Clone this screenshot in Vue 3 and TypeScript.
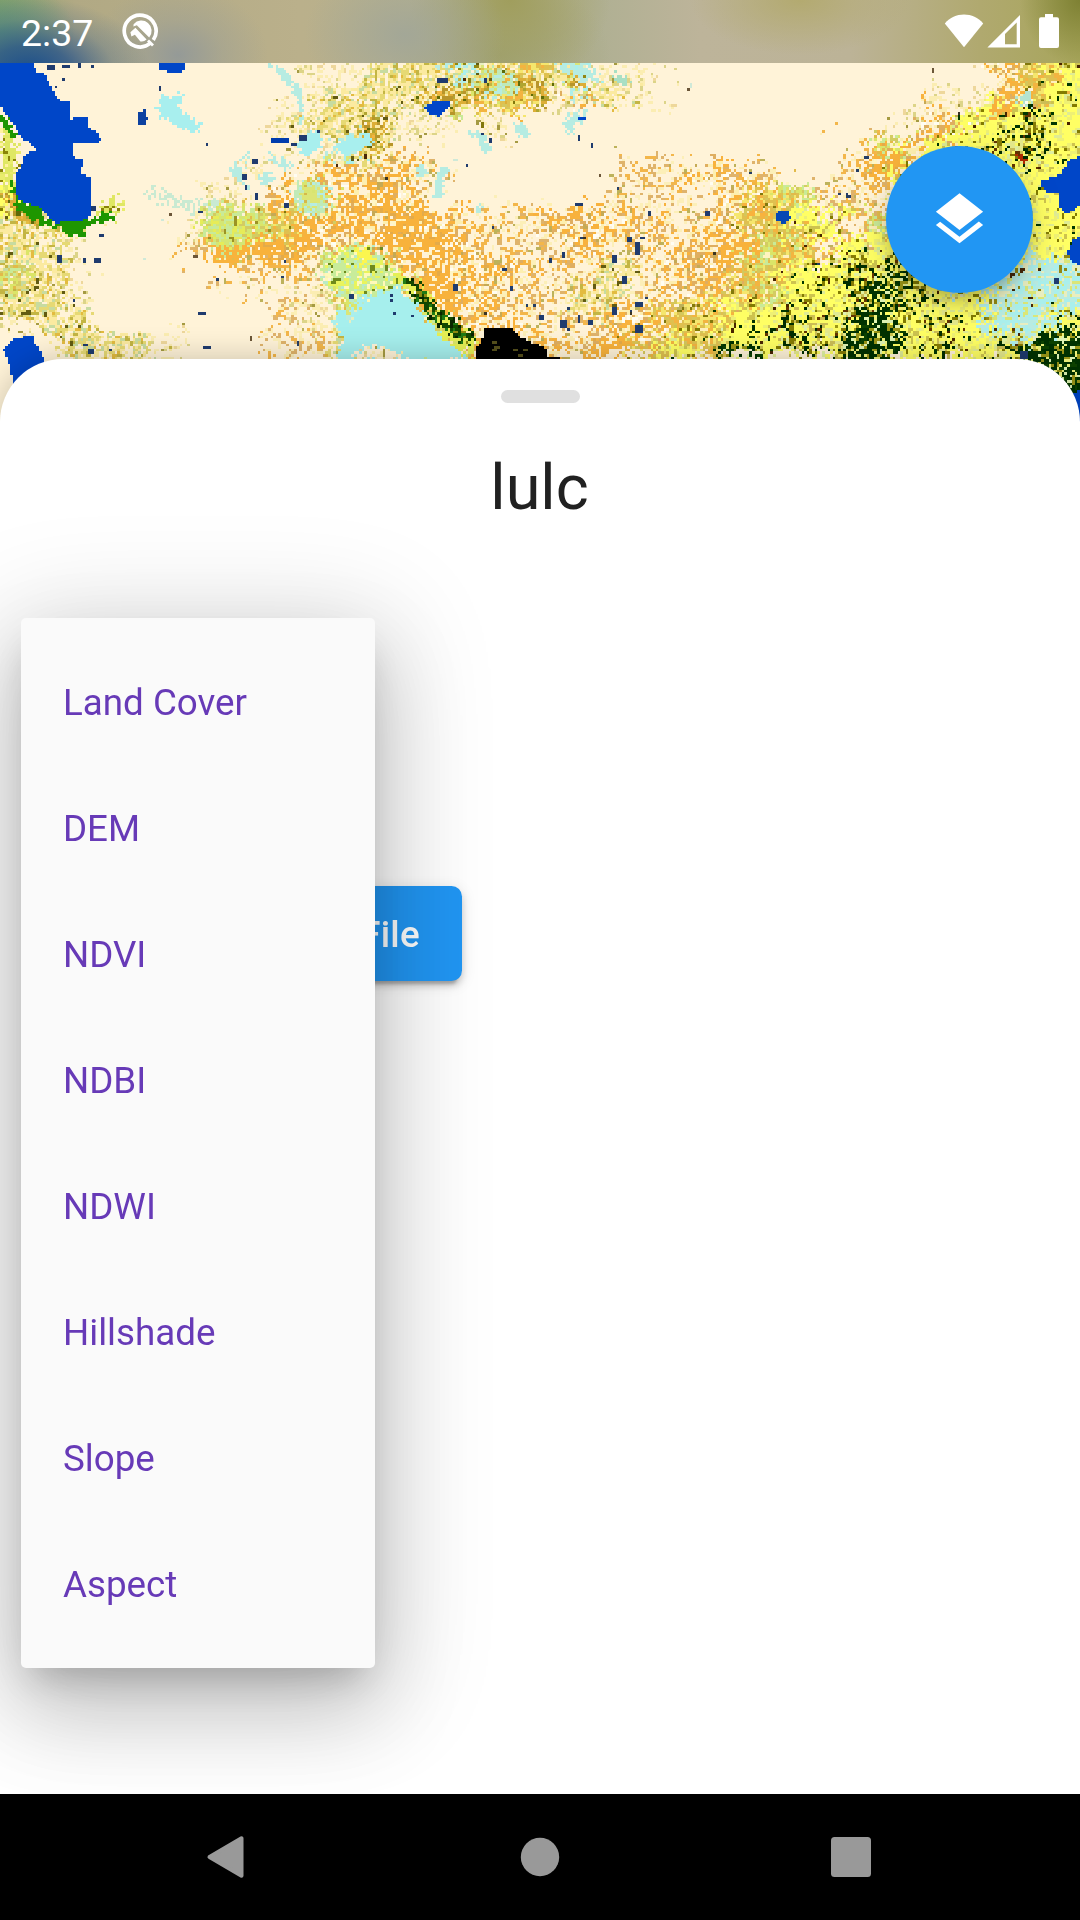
<script setup lang="ts">
import { onMounted, ref } from 'vue'

type Point = [number, number]
type Mix = [string, number][]

const layers: string[] = ['Land Cover', 'DEM', 'NDVI', 'NDBI', 'NDWI', 'Hillshade', 'Slope', 'Aspect']

const mapCanvas = ref<HTMLCanvasElement | null>(null)

const COLS = 415
const ROWS = 166
const CELL = 1080 / COLS

// Coarse land cover zones: one letter covers 30 x 25 px, starting at y = 60.
const zones: string[] = [
  '..........ssyyycymycss...........omY',
  '..........syyyygmmsoys.........ssomY',
  '.........syyyss.s.............soYYDY',
  '.........sscy...............rgoYYDDY',
  '........s.rooor......rrorr..rOYYYYYY',
  'Y......s.ogoOo......rrr.omgrrrYYYYYY',
  'ysy...sggmoOoOoorroooorromYYrgYYYYYY',
  'yys...rgOOoooOOorrrorrooOgmrYYYYYYYY',
  'gys....rrrrggoOoOorryrooomYYDDBDcccc',
  'yys......rsgCgOoorryyrromgYYDBDYYccc',
  'syy......rscCCgoorrroommYYDDBBYDYccD',
  '..yyys...rryCCgoroorOmYmBYDDBBYDYDBB',
  '.................................DBB',
  '.................................DBB',
  '.................................BBB',
]

const SAND = '#fff3d8'
const mixes: Record<string, Mix> = {
  '.': [[SAND, 0.9992], ['#cfe9d8', 0.9997], ['#6b5638', 1]],
  s: [[SAND, 0.66], ['#fbedb2', 0.86], ['#dcd488', 0.94], ['#eed79b', 0.985], ['#a59a42', 1]],
  y: [[SAND, 0.2], ['#fbeaa0', 0.52], ['#e6d974', 0.74], ['#c7dba0', 0.84], ['#c3b544', 0.92], ['#e3bb40', 0.985], ['#625b12', 1]],
  r: [[SAND, 0.56], ['#fcefb8', 0.72], ['#f3b64a', 0.85], ['#dfb36b', 0.96], ['#bdb25a', 0.993], ['#243d66', 1]],
  o: [[SAND, 0.28], ['#fdefb0', 0.46], ['#f8b23d', 0.77], ['#dfae60', 0.91], ['#fffdf2', 0.96], ['#c5aa55', 0.998], ['#3b3424', 1]],
  O: [['#f8b23b', 0.7], [SAND, 0.82], ['#e3ab4a', 0.94], ['#fff6c6', 1]],
  c: [['#e8eec0', 0.16], ['#b9ebe1', 0.48], ['#aaefec', 0.82], ['#dae678', 0.95], ['#918713', 0.985], ['#482809', 1]],
  C: [['#a8efee', 0.993], ['#cfe9b9', 1]],
  g: [['#dbe568', 0.3], ['#c9ea98', 0.52], ['#d3cc62', 0.76], ['#e2ba4a', 0.88], ['#fff4bf', 1]],
  m: [['#f5e66d', 0.22], ['#dfc04f', 0.5], ['#f3b440', 0.72], ['#d5c75b', 0.86], ['#fff0bc', 0.96], ['#82780c', 1]],
  Y: [['#ffff64', 0.66], ['#eef074', 0.8], ['#cdc34f', 0.88], ['#dfeb94', 0.94], ['#827b00', 0.978], ['#482400', 0.987], ['#003700', 1]],
  D: [['#fbfb63', 0.4], ['#e4e98c', 0.53], ['#cbbd55', 0.61], ['#857b05', 0.75], ['#dff0a0', 0.8], ['#002d00', 0.96], ['#643400', 1]],
  B: [['#003200', 0.54], ['#0d4200', 0.64], ['#9b9618', 0.77], ['#eef27d', 0.92], ['#dff3b4', 1]],
  // Patchy vegetation used inside the hand placed areas.
  p: [['#d4e674', 0.4], ['#c8ea9a', 0.66], ['#e6ec58', 0.84], ['#d3cc62', 0.96], ['#9b9324', 1]],
  q: [['#c8ec9a', 0.45], ['#e9f45c', 0.66], ['#fff9b8', 0.8], ['#b9ebc8', 0.94], ['#6f8a1c', 1]],
  v: [['#c0eab8', 0.5], ['#b6ece2', 0.75], ['#d8e570', 0.93], ['#d5b94a', 1]],
  n: [['#134800', 0.45], ['#1e7a14', 0.58], ['#e5ef55', 0.78], ['#0a2400', 0.92], ['#8f8a10', 1]],
  w: [['#b8952a', 0.18], ['#dcae36', 0.5], ['#b0a530', 0.66], ['#fae9a2', 0.86], ['#5e6a08', 0.93], ['#f3b440', 1]],
  f: [['#dfe763', 0.6], ['#e9ec6c', 0.8], ['#8a8208', 0.93], ['#fff2a0', 1]],
}

const shapes: { fill: string; pts: Point[]; ragged?: number }[] = [
  { fill: 'f', ragged: 5, pts: [[0, 128], [13, 132], [17, 160], [14, 182], [0, 190]] },
  { fill: 'w', ragged: 5, pts: [[0, 185], [12, 195], [22, 208], [40, 216], [45, 227], [18, 222], [5, 208]] },
  { fill: 'f', ragged: 7, pts: [[97, 215], [106, 201], [122, 199], [119, 213], [101, 224]] },
  { fill: '#1e9600', ragged: 2, pts: [[0, 112], [8, 120], [17, 136], [10, 137], [0, 124]] },
  { fill: '#1e9600', ragged: 3, pts: [[12, 178], [22, 202], [36, 206], [48, 220], [92, 219], [112, 210], [112, 219], [88, 224], [84, 236], [68, 235], [60, 228], [43, 226], [16, 209]] },
  { fill: '#0046c8', pts: [[0, 60], [33, 60], [36, 71], [46, 75], [50, 84], [55, 96], [60, 100], [70, 103], [71, 122], [74, 116], [88, 116], [90, 128], [97, 132], [101, 140], [96, 144], [74, 143], [73, 157], [83, 160], [81, 173], [90, 177], [90, 217], [80, 221], [54, 223], [38, 206], [20, 201], [16, 193], [16, 174], [22, 165], [26, 153], [36, 150], [30, 143], [22, 139], [12, 122], [0, 106]] },
  { fill: '#0046c8', pts: [[3, 350], [14, 338], [33, 336], [35, 343], [42, 353], [45, 362], [40, 385], [16, 392], [8, 360]] },
  { fill: '#0046c8', pts: [[156, 60], [186, 60], [183, 72], [171, 74], [160, 69]] },
  { fill: '#0d41a0', pts: [[137, 114], [145, 110], [148, 119], [143, 127], [138, 123]] },
  { fill: '#003cae', pts: [[270, 137], [288, 137], [290, 142], [270, 142]] },
  { fill: '#a8efee', ragged: 4, pts: [[156, 106], [164, 95], [184, 95], [177, 109], [194, 119], [200, 128], [196, 132], [180, 126], [158, 114]] },
  { fill: 'w', ragged: 10, pts: [[355, 122], [380, 112], [386, 128], [384, 152], [362, 150]] },
  { fill: '#a8efee', ragged: 3, pts: [[296, 142], [312, 131], [321, 132], [320, 151], [302, 157]] },
  { fill: '#a8efee', ragged: 3, pts: [[333, 150], [348, 135], [371, 134], [375, 141], [360, 152]] },
  { fill: '#b6ece2', ragged: 3, pts: [[268, 62], [282, 69], [300, 88], [304, 106], [301, 124], [298, 122], [300, 104], [288, 84]] },
  { fill: '#c9ead2', ragged: 6, pts: [[145, 187], [170, 196], [200, 206], [214, 197], [216, 207], [196, 213], [150, 197]] },
  { fill: '#b6ece2', ragged: 5, pts: [[229, 171], [246, 154], [258, 155], [242, 164], [248, 190], [240, 181]] },
  { fill: '#b6ece2', ragged: 4, pts: [[265, 153], [280, 157], [294, 165], [288, 170], [272, 161]] },
  { fill: '#b6ece2', ragged: 4, pts: [[260, 177], [270, 174], [275, 180], [268, 187], [259, 183]] },
  { fill: 'v', ragged: 5, pts: [[293, 190], [303, 180], [320, 180], [330, 192], [328, 208], [315, 217], [296, 211]] },
  { fill: '#dce575', ragged: 6, pts: [[303, 194], [313, 187], [321, 198], [310, 206]] },
  { fill: 'p', ragged: 10, pts: [[197, 229], [213, 210], [240, 216], [274, 225], [250, 242], [219, 251]] },
  { fill: '#f8b33c', ragged: 7, pts: [[208, 246], [230, 250], [250, 241], [252, 256], [229, 264], [211, 258]] },
  { fill: '#b6ece2', ragged: 2, pts: [[415, 167], [424, 163], [428, 174], [420, 178]] },
  { fill: '#b6ece2', ragged: 2, pts: [[438, 169], [449, 168], [443, 181], [442, 199], [433, 198], [435, 181]] },
  { fill: '#b6ece2', ragged: 2, pts: [[464, 132], [487, 132], [487, 143], [492, 148], [485, 154], [479, 146], [478, 138]] },
  { fill: '#b6ece2', ragged: 2, pts: [[514, 125], [525, 123], [529, 135], [520, 137]] },
  { fill: '#b6ece2', ragged: 4, pts: [[572, 113], [586, 111], [582, 122], [570, 132], [564, 126]] },
  { fill: '#b6ece2', ragged: 3, pts: [[474, 206], [481, 204], [483, 211], [475, 213]] },
  { fill: '#b6ece2', ragged: 5, pts: [[550, 63], [588, 66], [600, 75], [585, 80], [565, 70]] },
  { fill: '#a9dfc4', ragged: 3, pts: [[613, 72], [626, 78], [632, 86], [615, 83]] },
  { fill: 'w', ragged: 9, pts: [[415, 96], [445, 88], [480, 88], [520, 83], [522, 94], [470, 104], [455, 108], [418, 100]] },
  { fill: 'v', ragged: 6, pts: [[470, 76], [490, 68], [515, 74], [524, 86], [500, 98], [486, 94], [498, 83]] },
  { fill: 'w', ragged: 7, pts: [[498, 70], [525, 77], [546, 80], [551, 102], [540, 108], [530, 96], [516, 82]] },
  { fill: 'w', ragged: 5, pts: [[565, 74], [582, 82], [590, 90], [575, 87]] },
  { fill: 'q', ragged: 7, pts: [[322, 270], [332, 256], [350, 243], [372, 249], [402, 278], [398, 292], [372, 298], [350, 298], [328, 290]] },
  { fill: '#fbf64f', ragged: 4, pts: [[354, 246], [370, 250], [376, 262], [360, 262]] },
  { fill: '#a6efed', ragged: 2, pts: [[337, 359], [344, 334], [357, 315], [366, 300], [384, 292], [398, 289], [409, 299], [421, 315], [431, 325], [447, 340], [458, 350], [468, 359]] },
  { fill: '#a6efed', ragged: 3, pts: [[337, 308], [347, 310], [347, 330], [340, 335]] },
  { fill: 's', ragged: 3, pts: [[357, 352], [368, 346], [402, 351], [400, 360], [352, 360]] },
  { fill: '#e5ef55', ragged: 5, pts: [[388, 270], [400, 284], [420, 303], [446, 339], [470, 357], [475, 344], [453, 323], [426, 292], [400, 271]] },
  { fill: 'n', ragged: 4, pts: [[404, 279], [420, 282], [425, 293], [444, 313], [464, 326], [477, 337], [474, 346], [458, 340], [440, 327], [422, 307]] },
  { fill: '#000000', pts: [[475, 364], [477, 346], [484, 338], [483, 329], [512, 328], [518, 335], [532, 343], [545, 347], [546, 357], [559, 357], [559, 364]] },
  { fill: '#0046c8', pts: [[423, 107], [433, 102], [449, 102], [450, 107], [439, 116], [430, 113]] },
  { fill: '#0046c8', pts: [[579, 116], [588, 116], [584, 121], [579, 121]] },
  { fill: '#0648b3', pts: [[775, 213], [786, 210], [791, 218], [784, 224], [776, 220]] },
  { fill: '#f8b13b', ragged: 4, pts: [[985, 107], [1010, 104], [1012, 114], [990, 116]] },
  { fill: '#b3e4d0', ragged: 4, pts: [[1018, 96], [1032, 95], [1029, 105], [1018, 104]] },
  { fill: '#b22b00', ragged: 3, pts: [[1018, 157], [1024, 155], [1030, 162], [1019, 163]] },
  { fill: '#0046c8', pts: [[1040, 181], [1060, 175], [1070, 160], [1082, 156], [1082, 204], [1068, 214], [1058, 208], [1060, 193], [1044, 191]] },
  { fill: '#0046c8', pts: [[1067, 251], [1074, 239], [1082, 236], [1082, 266], [1070, 260]] },
  { fill: '#0046c8', pts: [[1070, 394], [1082, 390], [1082, 434], [1070, 434]] },
]

// Isolated water pixels: x, y, width and height.
const specks: [number, number, number, number][] = [
  [46, 64, 7, 4], [63, 66, 8, 3], [79, 63, 3, 5], [92, 66, 3, 3], [55, 86, 3, 3], [63, 79, 3, 3], [158, 86, 3, 5],
  [92, 205, 4, 5], [100, 234, 6, 3], [58, 255, 5, 9], [84, 257, 3, 6], [94, 257, 7, 6], [74, 300, 3, 3], [83, 343, 6, 3],
  [110, 349, 3, 3], [88, 349, 4, 4], [197, 312, 7, 3], [203, 345, 9, 3], [252, 158, 4, 4], [241, 174, 4, 5], [245, 184, 3, 6],
  [255, 192, 3, 9], [283, 204, 4, 6], [198, 210, 4, 3], [205, 142, 3, 3], [299, 135, 7, 4], [291, 143, 6, 3], [317, 129, 3, 3],
  [438, 79, 10, 4], [484, 78, 3, 4], [490, 138, 3, 5], [482, 134, 3, 3], [578, 136, 3, 5], [591, 144, 3, 4], [465, 163, 3, 3],
  [452, 284, 5, 7], [501, 268, 5, 3], [509, 286, 3, 6], [539, 315, 5, 5], [559, 320, 8, 7], [578, 316, 3, 9], [588, 321, 5, 4],
  [549, 258, 3, 4], [563, 253, 3, 4], [574, 202, 7, 3], [612, 255, 5, 8], [634, 242, 4, 12], [627, 237, 5, 4], [641, 238, 6, 3],
  [634, 301, 9, 6], [612, 306, 6, 7], [635, 325, 8, 7], [623, 275, 4, 8], [704, 212, 5, 4], [1054, 279, 5, 6], [1020, 351, 8, 7],
  [391, 293, 3, 3], [391, 299, 3, 3], [394, 313, 3, 3], [412, 315, 3, 3], [350, 294, 5, 5],
]

function noise(x: number, y: number, seed: number): number {
  let h = Math.imul(x + 1013, 374761393) ^ Math.imul(y + 311, 668265263) ^ Math.imul(seed + 7, 2246822519)
  h = Math.imul(h ^ (h >>> 13), 1274126177)
  h = Math.imul(h ^ (h >>> 15), 2246822519)
  return ((h ^ (h >>> 16)) >>> 0) / 4294967296
}

function smoothNoise(x: number, y: number, scale: number, seed: number): number {
  const fx = x / scale
  const fy = y / scale
  const ix = Math.floor(fx)
  const iy = Math.floor(fy)
  const tx = fx - ix
  const ty = fy - iy
  const top = noise(ix, iy, seed) * (1 - tx) + noise(ix + 1, iy, seed) * tx
  const low = noise(ix, iy + 1, seed) * (1 - tx) + noise(ix + 1, iy + 1, seed) * tx
  return top * (1 - ty) + low * ty
}

function inside(x: number, y: number, pts: Point[]): boolean {
  let hit = false
  for (let i = 0, j = pts.length - 1; i < pts.length; j = i++) {
    const [xi, yi] = pts[i]
    const [xj, yj] = pts[j]
    if (yi > y !== yj > y && x < ((xj - xi) * (y - yi)) / (yj - yi) + xi) hit = !hit
  }
  return hit
}

function mixColor(key: string, c: number, r: number): string {
  // Neighbouring pixels often share a value, which gives short runs instead of plain grain.
  const pick = noise(c, r, 5)
  const n = pick < 0.26 ? noise(c - 1, r, 6) : pick < 0.48 ? noise(c, r - 1, 6) : noise(c, r, 6)
  const found = mixes[key].find(([, limit]) => n <= limit)
  return found ? found[0] : SAND
}

function zoneAt(c: number, r: number, x: number, y: number): string {
  const jx = (smoothNoise(c, r, 5, 1) - 0.5) * 36 + (noise(c, r, 2) - 0.5) * 20
  const jy = (smoothNoise(c, r, 5, 3) - 0.5) * 30 + (noise(c, r, 4) - 0.5) * 18
  const col = Math.max(0, Math.min(35, Math.floor((x + jx) / 30)))
  const row = Math.max(0, Math.min(zones.length - 1, Math.floor((y + jy - 60) / 25)))
  return zones[row][col]
}

onMounted(() => {
  const ctx = mapCanvas.value?.getContext('2d')
  if (!ctx) return
  for (let r = 0; r < ROWS; r++) {
    for (let c = 0; c < COLS; c++) {
      const x = (c + 0.5) * CELL
      const y = (r + 0.5) * CELL
      let fill = zoneAt(c, r, x, y)
      for (const s of shapes) {
        const j = s.ragged ?? 0
        const px = x + (noise(c, r, 8) - 0.5) * 2 * j
        const py = y + (noise(c, r, 9) - 0.5) * 2 * j
        if (inside(px, py, s.pts)) fill = s.fill
      }
      ctx.fillStyle = fill.length === 1 ? mixColor(fill, c, r) : fill
      ctx.fillRect(c, r, 1, 1)
    }
  }
  ctx.fillStyle = '#1f3b6e'
  for (const [x, y, w, h] of specks) {
    ctx.fillRect(Math.round(x / CELL), Math.round(y / CELL), Math.max(1, Math.round(w / CELL)), Math.max(1, Math.round(h / CELL)))
  }
  ctx.fillStyle = '#56501c'
  for (const [x, y] of [[492, 342], [495, 347], [491, 350], [512, 350], [519, 353], [523, 350]]) {
    ctx.fillRect(Math.round(x / CELL), Math.round(y / CELL), 2, 1)
  }
})
</script>

<template>
  <div class="screen">
    <section class="map">
      <canvas ref="mapCanvas" class="raster" :width="COLS" :height="ROWS"></canvas>
      <header class="status">
        <div class="status-left">
          <span class="clock">2:37</span>
          <svg class="badge" width="37" height="37" viewBox="0 0 37 37">
            <path d="M28.4 30.2A15.9 15.9 0 1 1 31.3 27" fill="none" stroke="#fff" stroke-width="3.7" />
            <path d="M11.600 11.200A10.200 10.200 0 0 1 27.200 24.400L14.800 12.200L11.400 13.400Z" fill="#fff" />
            <path d="M8.400 19.200L13.400 14.800L24.600 26.600Q21.600 29.200 18.400 28.400L12.900 21.800L9.400 23.600Z" fill="#fff" />
            <path d="M26 27.500L31 32.500" stroke="#fff" stroke-width="2.8" />
          </svg>
        </div>
        <div class="status-right">
          <svg width="40" height="34" viewBox="0 0 40 34"><path d="M20 33.200L.8 9.400C6 3.500 12.500 .6 20 .6S34 3.500 39.200 9.400Z" fill="#fff" /></svg>
          <svg class="signal" width="33" height="33" viewBox="0 0 33 33"><path d="M33 0V32.500H.4ZM29.700 7.400L18 19.100V29.200H29.700Z" fill="#fff" fill-rule="evenodd" /></svg>
          <svg class="battery" width="20" height="34" viewBox="0 0 20 34"><path d="M6 0H14V3.300H18Q20 3.300 20 5.300V32Q20 34 18 34H2Q0 34 0 32V5.300Q0 3.300 2 3.300H6Z" fill="#fff" /></svg>
        </div>
      </header>
      <button class="fab" aria-label="Layers">
        <svg width="63" height="63" viewBox="0 0 24 24">
          <path fill="#fff" d="M11.990 18.540l-7.370-5.730L3 14.070l9 7 9-7-1.630-1.270-7.380 5.740zM12 16l7.360-5.730L21 9l-9-7-9 7 1.630 1.270L12 16z" />
        </svg>
      </button>
    </section>

    <main class="sheet">
      <div class="handle"></div>
      <h1 class="title">lulc</h1>
      <button class="file-button">File</button>
      <ul class="menu">
        <li v-for="layer in layers" :key="layer" class="menu-item">{{ layer }}</li>
      </ul>
    </main>

    <nav class="nav">
      <svg width="38" height="44" viewBox="0 0 38 44"><path d="M35.500 3.300V40.700L3.500 22Z" fill="#999" stroke="#999" stroke-width="4" stroke-linejoin="round" /></svg>
      <svg width="40" height="40" viewBox="0 0 40 40"><circle cx="20" cy="20" r="19.200" fill="#999" /></svg>
      <svg width="40" height="40" viewBox="0 0 40 40"><rect width="40" height="40" rx="3.500" fill="#999" /></svg>
    </nav>
  </div>
</template>

<style>
body {
  margin: 0;
}
</style>

<style scoped>
.screen {
  width: 1080px;
  height: 1920px;
  display: flex;
  flex-direction: column;
  overflow: hidden;
  background: #fff;
  font-family: Roboto, 'Liberation Sans', sans-serif;
}

.map {
  position: relative;
  flex: none;
  height: 432px;
}

.raster {
  display: block;
  width: 1080px;
  height: 432px;
  image-rendering: pixelated;
}

.status {
  position: absolute;
  inset: 0 0 auto;
  box-sizing: border-box;
  height: 63px;
  padding: 0 21px;
  display: flex;
  justify-content: space-between;
  background:
    radial-gradient(ellipse 120px 75px at 30px 72px, #194d8c 0%, rgba(40, 84, 138, 0.8) 35%, rgba(80, 110, 138, 0.35) 70%, transparent 100%),
    radial-gradient(ellipse 75px 50px at 0 32px, #619a73 0%, transparent 100%),
    radial-gradient(ellipse 90px 70px at 178px 55px, rgba(145, 152, 153, 0.9) 0%, rgba(150, 156, 152, 0.4) 50%, transparent 100%),
    radial-gradient(ellipse 100px 75px at 405px 35px, #a3a797 0%, transparent 100%),
    radial-gradient(ellipse 100px 90px at 510px 0, #a09e5d 0%, transparent 100%),
    radial-gradient(ellipse 110px 80px at 500px 55px, #a0a274 0%, transparent 100%),
    radial-gradient(ellipse 110px 55px at 800px 0, #b3aa70 0%, transparent 100%),
    radial-gradient(ellipse 60px 65px at 1080px 0, #7e8133 0%, transparent 100%),
    linear-gradient(90deg, #8ea36b 0, #b1a984 75px, #bab08b 300px, #b1b18f 530px, #b0b093 600px, #bdb49a 700px, #bcb397 850px, #b0a96f 980px, #a7a55b 1080px);
}

.status-left,
.status-right {
  display: flex;
  align-items: flex-start;
}

.clock {
  margin-top: 11px;
  font-size: 37.5px;
  line-height: 44px;
  color: #fff;
}

.badge {
  margin: 13px 0 0 29px;
}

.status-right {
  padding-top: 14px;
}

.signal {
  margin: 1px 0 0 3px;
}

.battery {
  margin-left: 19px;
}

.fab {
  position: absolute;
  top: 146px;
  right: 47px;
  width: 147px;
  height: 147px;
  padding: 0;
  border: 0;
  border-radius: 50%;
  display: flex;
  align-items: center;
  justify-content: center;
  background: #2196f3;
  box-shadow:
    0 8px 15px -3px rgba(0, 0, 0, 0.2),
    0 16px 30px rgba(0, 0, 0, 0.12),
    0 3px 40px rgba(0, 0, 0, 0.08);
}

.sheet {
  position: relative;
  flex: 1;
  margin-top: -73px;
  display: flex;
  flex-direction: column;
  align-items: center;
  background: #fff;
  border-radius: 63px 63px 0 0;
  box-shadow: 0 0 32px rgba(0, 0, 0, 0.22);
}

.handle {
  width: 79px;
  height: 13px;
  margin-top: 31px;
  border-radius: 7px;
  background: #e0e0e0;
}

.title {
  margin: 47px 1px 0 0;
  font-size: 63px;
  line-height: 76px;
  font-weight: 400;
  color: #212121;
}

.file-button {
  align-self: flex-start;
  box-sizing: border-box;
  width: 262px;
  height: 95px;
  margin: 360px 0 0 200px;
  padding: 2px 42px 0;
  border: 0;
  border-radius: 10.5px;
  text-align: right;
  font: 500 36.75px/93px Roboto, 'Liberation Sans', sans-serif;
  letter-spacing: 0.3px;
  color: #fff;
  background: #2196f3;
  box-shadow:
    0 8px 3px -5px rgba(0, 0, 0, 0.2),
    0 5px 6px rgba(0, 0, 0, 0.14),
    0 3px 15px rgba(0, 0, 0, 0.12);
}

.menu {
  position: absolute;
  top: 259px;
  left: 21px;
  box-sizing: border-box;
  width: 354px;
  margin: 0;
  padding: 22px 0 20px;
  list-style: none;
  border-radius: 5px;
  background: #fafafa;
  box-shadow:
    0 21px 34px -13px rgba(0, 0, 0, 0.2),
    0 42px 88px 5px rgba(0, 0, 0, 0.15),
    0 16px 112px 17px rgba(0, 0, 0, 0.14);
}

.menu-item {
  height: 126px;
  padding-left: 42px;
  font-size: 36.75px;
  line-height: 126px;
  color: #673ab7;
}

.nav {
  position: relative;
  flex: none;
  box-sizing: border-box;
  height: 126px;
  padding: 0 209px 0 206px;
  display: grid;
  grid-template-columns: 1fr auto 1fr;
  align-items: center;
  column-gap: 100px;
  background: #000;
}

.nav svg:first-child {
  justify-self: start;
}

.nav svg:nth-child(2) {
  margin-left: 3px;
}

.nav svg:last-child {
  justify-self: end;
}
</style>
